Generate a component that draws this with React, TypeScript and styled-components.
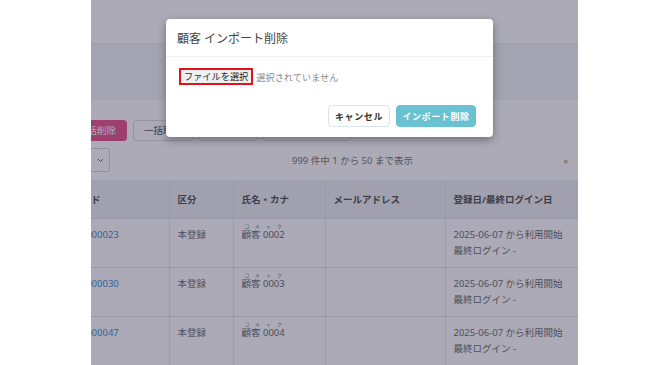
import React from "react";
import styled, { createGlobalStyle } from "styled-components";

const GlobalStyle = createGlobalStyle`
  html, body { margin: 0; padding: 0; background: #ffffff; }
  body { font-family: "Noto Sans", "Noto Sans CJK JP", sans-serif; }
  * { box-sizing: border-box; }
`;

const Page = styled.div`
  width: 670px;
  height: 365px;
  padding-left: 91px;
  display: flex;
  background: #ffffff;
`;

const Screen = styled.div`
  position: relative;
  width: 487px;
  height: 365px;
  overflow: hidden;
  background: #ffffff;
`;

const AppContent = styled.div`
  width: 535px;
  margin-left: -48px;
  display: flex;
  flex-direction: column;
`;

const TopBar = styled.div`
  height: 44px;
  border-bottom: 1px solid #ececf0;
  background: #ffffff;
`;

const TitleBand = styled.div`
  height: 56px;
  background: #f4f4f7;
`;

const Toolbar = styled.div`
  display: flex;
  gap: 6px;
  padding: 20px 0 0 24px;
`;

const ToolButton = styled.button<{ $variant: "pink" | "outline" }>`
  height: 21px;
  padding: 0 10px;
  border-radius: 3px;
  font-family: inherit;
  font-size: 9.5px;
  line-height: 19px;
  white-space: nowrap;
  border: 1px solid ${(p) => (p.$variant === "pink" ? "#ea5a92" : "#dcdce2")};
  background: ${(p) => (p.$variant === "pink" ? "#ea5a92" : "#ffffff")};
  color: ${(p) => (p.$variant === "pink" ? "#ffffff" : "#555555")};
`;

const PaginationRow = styled.div`
  display: flex;
  align-items: center;
  height: 24px;
  margin-top: 7px;
  padding-left: 24px;
  padding-right: 10px;
`;

const SelectBox = styled.div`
  width: 43px;
  height: 24px;
  border: 1px solid #d6d6dc;
  border-radius: 3px;
  background: #ffffff;
  display: flex;
  align-items: center;
  justify-content: flex-end;
  padding-right: 5px;
  color: #777;
`;

const PageInfo = styled.div`
  margin-left: 182px;
  font-size: 9.5px;
  color: #7a7a7a;
  white-space: nowrap;
`;

const PagerArrow = styled.div`
  margin-left: auto;
  font-size: 9px;
  color: #8a8a8a;
`;

const Table = styled.table`
  margin-top: 8px;
  width: 535px;
  border-collapse: collapse;
  table-layout: fixed;
  font-size: 9.5px;
`;

const Th = styled.th<{ $first?: boolean }>`
  height: 38px;
  padding: 0 8px 0 ${(p) => (p.$first ? "10px" : "8px")};
  background: #f0f0f3;
  color: #555;
  font-weight: 700;
  text-align: left;
  white-space: nowrap;
  border-right: 1px solid #e4e4ea;
  border-bottom: 1px solid #e4e4ea;
`;

const Td = styled.td<{ $first?: boolean }>`
  height: 49px;
  padding: 8px 8px 0 ${(p) => (p.$first ? "10px" : "8px")};
  vertical-align: top;
  line-height: 16px;
  color: #707070;
  white-space: nowrap;
  border-right: 1px solid #e8e8ed;
  border-bottom: 1px solid #e4e4ea;
`;

const IdLink = styled.span`
  color: #3f8fd6;
`;

const NameRuby = styled.ruby`
  ruby-position: over;
  rt {
    font-size: 4.8px;
    line-height: 4px;
    color: #777;
  }
`;

const Backdrop = styled.div`
  position: absolute;
  inset: 0;
  background: rgba(22, 20, 52, 0.36);
  padding: 19px 0 0 75px;
`;

const Modal = styled.div`
  width: 327px;
  height: 118px;
  background: #ffffff;
  border-radius: 4px;
  box-shadow: 0 3px 8px rgba(0, 0, 0, 0.35);
  display: flex;
  flex-direction: column;
`;

const ModalHeader = styled.div`
  height: 38px;
  padding: 0 11px;
  display: flex;
  align-items: center;
  border-bottom: 1px solid #eef0f3;
  font-size: 12px;
  color: #444;
`;

const ModalBody = styled.div`
  display: flex;
  align-items: center;
  gap: 3px;
  padding: 11px 13px 0;
`;

const FileButton = styled.div`
  height: 17px;
  padding: 0 3px;
  border: 2px solid #e0121c;
  background: #efefef;
  font-size: 9.2px;
  line-height: 13px;
  color: #1f1f1f;
  white-space: nowrap;
`;

const FileStatus = styled.span`
  font-size: 9.2px;
  color: #8c8c8c;
  white-space: nowrap;
`;

const ModalFooter = styled.div`
  margin-top: auto;
  display: flex;
  justify-content: flex-end;
  gap: 6px;
  padding: 0 17px 10px;
`;

const FooterButton = styled.button<{ $primary?: boolean; $w: number }>`
  width: ${(p) => p.$w}px;
  height: 22px;
  padding: 0;
  border-radius: 4px;
  font-family: inherit;
  font-size: 9px;
  font-weight: 700;
  letter-spacing: 0.6px;
  border: 1px solid ${(p) => (p.$primary ? "#68c2d1" : "#dde3ea")};
  background: ${(p) => (p.$primary ? "#68c2d1" : "#ffffff")};
  color: ${(p) => (p.$primary ? "#ffffff" : "#333333")};
`;

const rows = [
  { id: "C00000000023", name: "顧客 0002" },
  { id: "C00000000030", name: "顧客 0003" },
  { id: "C00000000047", name: "顧客 0004" },
];

export default function App() {
  return (
    <>
      <GlobalStyle />
      <Page>
        <Screen>
          <AppContent>
            <TopBar />
            <TitleBand />
            <Toolbar>
              <ToolButton $variant="pink">一括削除</ToolButton>
              <ToolButton $variant="outline">一括取込</ToolButton>
              <ToolButton $variant="outline">CSV出力</ToolButton>
              <ToolButton $variant="outline">インポート削除</ToolButton>
            </Toolbar>
            <PaginationRow>
              <SelectBox>
                <svg width="7" height="5" viewBox="0 0 7 5">
                  <path d="M1 1 L3.5 3.5 L6 1" fill="none" stroke="#777" strokeWidth="1" />
                </svg>
              </SelectBox>
              <PageInfo>999 件中 1 から 50 まで表示</PageInfo>
              <PagerArrow>«</PagerArrow>
            </PaginationRow>
            <Table>
              <colgroup>
                <col style={{ width: 126 }} />
                <col style={{ width: 64 }} />
                <col style={{ width: 92 }} />
                <col style={{ width: 120 }} />
                <col style={{ width: 133 }} />
              </colgroup>
              <thead>
                <tr>
                  <Th $first>顧客コード</Th>
                  <Th>区分</Th>
                  <Th>氏名・カナ</Th>
                  <Th>メールアドレス</Th>
                  <Th>登録日/最終ログイン日</Th>
                </tr>
              </thead>
              <tbody>
                {rows.map((r) => (
                  <tr key={r.id}>
                    <Td $first>
                      <IdLink>{r.id}</IdLink>
                    </Td>
                    <Td>本登録</Td>
                    <Td>
                      <NameRuby>
                        {r.name}
                        <rt>コキャク</rt>
                      </NameRuby>
                    </Td>
                    <Td />
                    <Td>
                      2025-06-07 から利用開始
                      <br />
                      最終ログイン -
                    </Td>
                  </tr>
                ))}
              </tbody>
            </Table>
          </AppContent>
          <Backdrop>
            <Modal>
              <ModalHeader>顧客 インポート削除</ModalHeader>
              <ModalBody>
                <FileButton>ファイルを選択</FileButton>
                <FileStatus>選択されていません</FileStatus>
              </ModalBody>
              <ModalFooter>
                <FooterButton $w={62}>キャンセル</FooterButton>
                <FooterButton $w={80} $primary>
                  インポート削除
                </FooterButton>
              </ModalFooter>
            </Modal>
          </Backdrop>
        </Screen>
      </Page>
    </>
  );
}
